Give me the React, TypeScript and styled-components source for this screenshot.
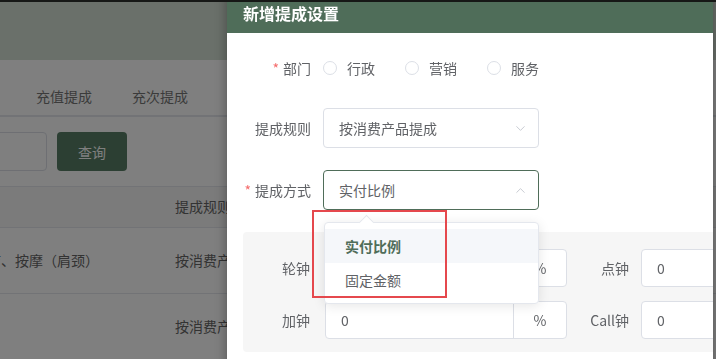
import React from 'react';
import styled, { createGlobalStyle } from 'styled-components';
import { ChevronDown, ChevronUp } from 'lucide-react';

const GlobalStyle = createGlobalStyle`
  html, body {
    margin: 0;
    padding: 0;
    overflow: hidden;
    background: #ffffff;
  }
  body {
    font-family: "Noto Sans CJK SC", "Noto Sans", sans-serif;
    font-size: 14px;
    color: #606266;
  }
`;

const primary = '#4f6d59';

function App() {
  return (
    <>
      <GlobalStyle />
      <ScreenEdge />
      <Page>
        <PageInner>
          <PageHeader />
          <TabsBar>
            <Tab>充值提成</Tab>
            <Tab>充次提成</Tab>
          </TabsBar>
          <SearchRow>
            <SearchInput />
            <SearchButton>查询</SearchButton>
          </SearchRow>
          <Table>
            <TableRow $head>
              <Cell />
              <Cell />
              <Cell>提成规则</Cell>
            </TableRow>
            <TableRow>
              <Cell />
              <Cell>足疗、按摩（肩颈）</Cell>
              <Cell>按消费产品提成</Cell>
            </TableRow>
            <TableRow>
              <Cell />
              <Cell />
              <Cell>按消费产品提成</Cell>
            </TableRow>
          </Table>
        </PageInner>
      </Page>
      <Overlay />
      <Dialog>
        <DialogHeader>新增提成设置</DialogHeader>
        <DialogBody>
          <FormItem $mb={20}>
            <FormLabel $required>部门</FormLabel>
            <RadioGroup>
              {['行政', '营销', '服务'].map((t) => (
                <Radio key={t}>
                  <RadioCircle />
                  <RadioText>{t}</RadioText>
                </Radio>
              ))}
            </RadioGroup>
          </FormItem>
          <FormItem $mb={22}>
            <FormLabel>提成规则</FormLabel>
            <SelectWrap>
              <SelectBox>
                <span>按消费产品提成</span>
                <ChevronDown size={15} color="#c0c4cc" strokeWidth={1.4} />
              </SelectBox>
            </SelectWrap>
          </FormItem>
          <FormItem $mb={22}>
            <FormLabel $required>提成方式</FormLabel>
            <SelectWrap>
              <SelectBox $focus>
                <span>实付比例</span>
                <ChevronUp size={15} color="#c0c4cc" strokeWidth={1.4} />
              </SelectBox>
              <Dropdown>
                <DropdownArrow />
                <DropdownItem $active>实付比例</DropdownItem>
                <DropdownItem>固定金额</DropdownItem>
              </Dropdown>
              <Annotation />
            </SelectWrap>
          </FormItem>
          <Panel>
            <PanelRow>
              <PanelLabel $w={82} $pr={15}>轮钟</PanelLabel>
              <InputGroup>
                <GroupInput>0</GroupInput>
                <Addon>%</Addon>
              </InputGroup>
              <PanelLabel $w={74} $pr={12}>点钟</PanelLabel>
              <PlainInput>0</PlainInput>
            </PanelRow>
            <PanelRow>
              <PanelLabel $w={82} $pr={15}>加钟</PanelLabel>
              <InputGroup>
                <GroupInput>0</GroupInput>
                <Addon>%</Addon>
              </InputGroup>
              <PanelLabel $w={74} $pr={12}>Call钟</PanelLabel>
              <PlainInput>0</PlainInput>
            </PanelRow>
          </Panel>
        </DialogBody>
      </Dialog>
    </>
  );
}

const ScreenEdge = styled.div`
  position: fixed;
  top: 0;
  left: 0;
  right: 0;
  height: 2px;
  background: #161816;
  z-index: 50;
`;

const Page = styled.div`
  width: 716px;
  height: 359px;
  overflow: hidden;
`;

/* page is scrolled sideways behind the dialog */
const PageInner = styled.div`
  margin-left: -160px;
  width: 900px;
`;

const PageHeader = styled.div`
  height: 60px;
  background: #d4e0d4;
`;

const TabsBar = styled.div`
  display: flex;
  margin-top: 17px;
  padding-left: 176px;
  border-bottom: 2px solid #e4e7ed;
`;

const Tab = styled.div`
  height: 38px;
  line-height: 38px;
  padding: 0 20px;
  font-size: 14px;
  color: #777777;
`;

const SearchRow = styled.div`
  display: flex;
  gap: 10px;
  margin-top: 15px;
  padding-left: 20px;
`;

const SearchInput = styled.div`
  width: 185px;
  height: 37px;
  border: 1px solid #dcdfe6;
  border-radius: 4px;
  background: #fff;
`;

const SearchButton = styled.div`
  width: 70px;
  height: 39px;
  border-radius: 4px;
  background: #587e66;
  color: #fff;
  font-size: 14px;
  display: flex;
  align-items: center;
  justify-content: center;
`;

const Table = styled.div`
  margin-top: 15px;
  border-top: 1px solid #e4e7ed;
`;

const TableRow = styled.div<{ $head?: boolean }>`
  display: grid;
  grid-template-columns: 121px 202px 1fr;
  height: ${(p) => (p.$head ? 41 : 66)}px;
  align-items: center;
  border-bottom: 1px solid #e4e7ed;
  background: ${(p) => (p.$head ? '#f6f6f6' : '#fff')};
  padding-bottom: 2px;
  box-sizing: border-box;
`;

const Cell = styled.div`
  padding-left: 12px;
  color: #666666;
  white-space: nowrap;
  overflow: hidden;
`;

const Overlay = styled.div`
  position: fixed;
  inset: 0;
  background: rgba(0, 0, 0, 0.5);
  z-index: 10;
`;

const Dialog = styled.div`
  position: fixed;
  left: 227px;
  top: -8px;
  width: 486px;
  height: 400px;
  overflow: hidden;
  background: #fff;
  box-shadow: 0 0 12px rgba(0, 0, 0, 0.35);
  z-index: 20;
`;

const DialogHeader = styled.div`
  height: 41px;
  background: ${primary};
  color: #fff;
  font-size: 16px;
  font-weight: 700;
  display: flex;
  align-items: center;
  padding: 0 16px;
  padding-top: 1px;
  box-sizing: border-box;
`;

const DialogBody = styled.div`
  padding: 15px 0 0 16px;
`;

const FormItem = styled.div<{ $mb: number }>`
  display: flex;
  align-items: center;
  height: 40px;
  margin-bottom: ${(p) => p.$mb}px;
`;

const FormLabel = styled.label<{ $required?: boolean }>`
  width: 80px;
  flex-shrink: 0;
  box-sizing: border-box;
  padding-right: 12px;
  text-align: right;
  font-size: 14px;
  color: #606266;
  &::before {
    content: ${(p) => (p.$required ? "'*'" : "''")};
    color: #f56c6c;
    margin-right: 4px;
  }
`;

const RadioGroup = styled.div`
  display: flex;
  align-items: center;
`;

const Radio = styled.div`
  display: flex;
  align-items: center;
  margin-right: 30px;
`;

const RadioCircle = styled.span`
  width: 14px;
  height: 14px;
  box-sizing: border-box;
  border: 1px solid #dcdfe6;
  border-radius: 50%;
  background: #fff;
`;

const RadioText = styled.span`
  padding-left: 10px;
  font-size: 14px;
  color: #606266;
`;

const SelectWrap = styled.div`
  position: relative;
  width: 216px;
`;

const SelectBox = styled.div<{ $focus?: boolean }>`
  height: 40px;
  box-sizing: border-box;
  border: 1px solid ${(p) => (p.$focus ? primary : '#dcdfe6')};
  border-radius: 4px;
  padding: 0 10px 0 15px;
  display: flex;
  align-items: center;
  justify-content: space-between;
  font-size: 14px;
  color: #606266;
  background: #fff;
`;

const Dropdown = styled.div`
  position: absolute;
  top: 52px;
  left: 1px;
  width: 215px;
  box-sizing: border-box;
  padding: 6px 0;
  background: #fff;
  border: 1px solid #e4e7ed;
  border-radius: 4px;
  box-shadow: 0 2px 12px rgba(0, 0, 0, 0.1);
  z-index: 5;
`;

const DropdownArrow = styled.span`
  position: absolute;
  top: -6px;
  left: 36px;
  width: 10px;
  height: 10px;
  background: #fff;
  border-left: 1px solid #e4e7ed;
  border-top: 1px solid #e4e7ed;
  transform: rotate(45deg);
`;

const DropdownItem = styled.div<{ $active?: boolean }>`
  position: relative;
  height: 34px;
  line-height: 34px;
  padding: 0 20px;
  font-size: 14px;
  color: ${(p) => (p.$active ? primary : '#606266')};
  font-weight: ${(p) => (p.$active ? 700 : 400)};
  background: ${(p) => (p.$active ? '#f5f7fa' : '#fff')};
`;

const Annotation = styled.div`
  position: absolute;
  left: -11px;
  top: 40px;
  width: 135px;
  height: 88px;
  box-sizing: border-box;
  border: 2px solid #e5484d;
  z-index: 6;
  pointer-events: none;
`;

const Panel = styled.div`
  display: flex;
  flex-direction: column;
  gap: 14px;
  padding: 17px 0 13px;
  background: #f6f6f6;
  border-radius: 4px;
  width: 520px;
`;

const PanelRow = styled.div`
  display: flex;
  align-items: center;
  height: 38px;
`;

const PanelLabel = styled.div<{ $w: number; $pr: number }>`
  width: ${(p) => p.$w}px;
  padding-right: ${(p) => p.$pr}px;
  box-sizing: border-box;
  text-align: right;
  flex-shrink: 0;
  font-size: 14px;
  color: #606266;
`;

const InputGroup = styled.div`
  display: flex;
  width: 242px;
  height: 38px;
  box-sizing: border-box;
  border: 1px solid #dcdfe6;
  border-radius: 4px;
  background: #fff;
  flex-shrink: 0;
`;

const GroupInput = styled.div`
  flex: 1;
  display: flex;
  align-items: center;
  padding-left: 15px;
  font-size: 14px;
  color: #606266;
`;

const Addon = styled.div`
  width: 52px;
  border-left: 1px solid #dcdfe6;
  display: flex;
  align-items: center;
  justify-content: center;
  font-size: 14px;
  color: #606266;
`;

const PlainInput = styled.div`
  width: 200px;
  height: 38px;
  box-sizing: border-box;
  border: 1px solid #dcdfe6;
  border-radius: 4px;
  background: #fff;
  display: flex;
  align-items: center;
  padding-left: 15px;
  font-size: 14px;
  color: #606266;
  flex-shrink: 0;
`;

export default App;
